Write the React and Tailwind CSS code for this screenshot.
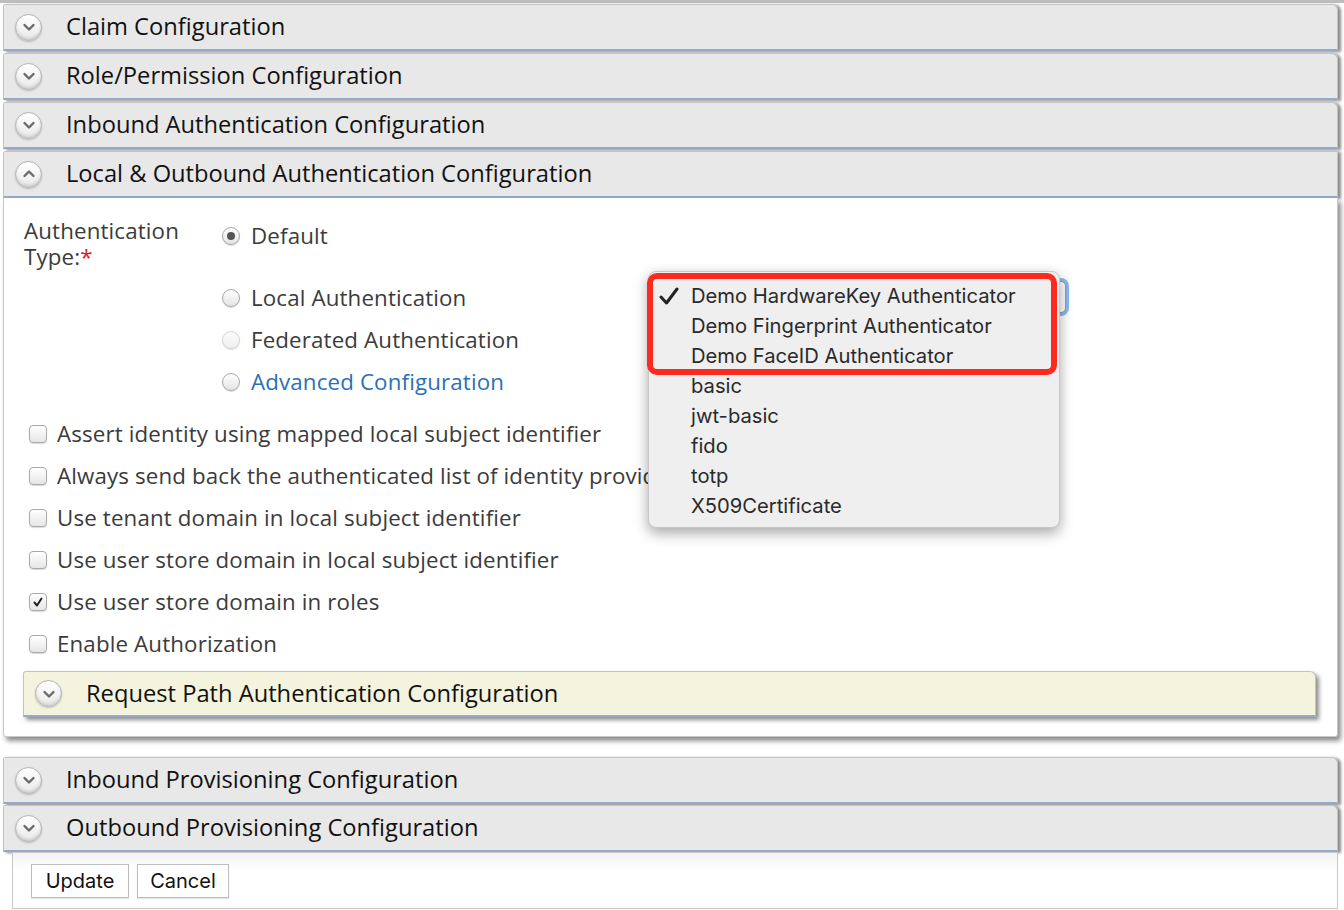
import React from "react";

const OPEN = { fontFamily: '"Open Sans", "Noto Sans", sans-serif' };
const SYS = { fontFamily: 'Inter, "Liberation Sans", sans-serif' };

function CircleIcon({ up }) {
  return (
    <div className="w-[27px] h-[27px] rounded-full border border-[#b3b3b3] bg-[linear-gradient(#ffffff,#e9e9e9)] shadow-[inset_0_-2px_3px_rgba(0,0,0,0.12),0_1px_2px_rgba(0,0,0,0.2)] flex items-center justify-center shrink-0">
      <svg width="16" height="16" viewBox="0 0 16 16">
        {up ? (
          <path d="M3.5 10 L8 5.5 L12.5 10" fill="none" stroke="#6a6a6a" strokeWidth="2.4" strokeLinecap="round" strokeLinejoin="round" />
        ) : (
          <path d="M3.5 6 L8 10.5 L12.5 6" fill="none" stroke="#6a6a6a" strokeWidth="2.4" strokeLinecap="round" strokeLinejoin="round" />
        )}
      </svg>
    </div>
  );
}

function Header({ title, up, className = "" }) {
  return (
    <div
      className={`h-[47px] bg-[#e8e8e8] border border-[#c3c3c3] border-b-2 border-b-[#98a9c8] rounded-tr-[6px] rounded-tl-[2px] shadow-[3px_1px_3px_rgba(0,0,0,0.45)] flex items-center pl-[11px] ${className}`}
    >
      <CircleIcon up={up} />
      <span className="ml-[24px] text-[23.7px] text-[#111] leading-none" style={OPEN}>
        {title}
      </span>
    </div>
  );
}

function Radio({ checked, faded }) {
  return (
    <div
      className={`w-[18px] h-[18px] rounded-full border ${faded ? "border-[#d6d6d6] bg-[linear-gradient(#fbfbfb,#f0f0f0)]" : "border-[#a9a9a9] bg-[linear-gradient(#ffffff,#e4e4e4)]"} shadow-[0_1px_1px_rgba(0,0,0,0.15)] flex items-center justify-center shrink-0`}
    >
      {checked && <div className="w-[8px] h-[8px] rounded-full bg-[#555]" />}
    </div>
  );
}

function Checkbox({ checked }) {
  return (
    <div className="w-[18px] h-[18px] rounded-[4px] border border-[#a9a9a9] bg-[linear-gradient(#ffffff,#e6e6e6)] shadow-[0_1px_1px_rgba(0,0,0,0.15)] flex items-center justify-center shrink-0">
      {checked && (
        <svg width="12" height="12" viewBox="0 0 12 12">
          <path d="M2.5 6.5 L5 9.5 L9.5 2.5" fill="none" stroke="#222" strokeWidth="2" strokeLinecap="round" strokeLinejoin="round" />
        </svg>
      )}
    </div>
  );
}

const checks = [
  ["Assert identity using mapped local subject identifier", false],
  ["Always send back the authenticated list of identity providers", false],
  ["Use tenant domain in local subject identifier", false],
  ["Use user store domain in local subject identifier", false],
  ["Use user store domain in roles", true],
  ["Enable Authorization", false],
];

const options = [
  "Demo HardwareKey Authenticator",
  "Demo Fingerprint Authenticator",
  "Demo FaceID Authenticator",
  "basic",
  "jwt-basic",
  "fido",
  "totp",
  "X509Certificate",
];

export default function App() {
  return (
    <div className="relative w-[1344px] h-[910px] overflow-hidden bg-white">
      <div className="h-[3px] bg-[#bdbdbd]" />
      <div className="pl-[3px] pr-[6px] pt-[1px]">
        <Header title="Claim Configuration" className="mb-[2px]" />
        <Header title="Role/Permission Configuration" className="mb-[2px]" />
        <Header title="Inbound Authentication Configuration" className="mb-[2px]" />
        <Header title="Local & Outbound Authentication Configuration" up className="mb-0 rounded-tr-none shadow-[3px_0_3px_rgba(0,0,0,0.35)]" />

        {/* expanded panel */}
        <div
          className="h-[539px] bg-white border-l border-r border-b border-[#c9c9c9] rounded-b-[3px] shadow-[3px_4px_5px_rgba(0,0,0,0.45)] pl-[20px] pr-[21px] pt-[20px] text-[22.3px] tracking-[0.15px] text-[#3b3b3b]"
          style={OPEN}
        >
          <div className="flex">
            <div className="w-[198px] flex flex-col">
              <div className="h-[26px] leading-[26px] overflow-visible">Authentication</div>
              <div className="h-[26px] leading-[26px] overflow-visible">
                Type:<span className="text-[#e02020]">*</span>
              </div>
            </div>
            <div className="flex flex-col">
              <div className="h-[26px] mt-[5px] mb-[28px] flex items-center">
                <Radio checked />
                <span className="ml-[11px]">Default</span>
              </div>
              <div className="h-[42px] flex items-center">
                <Radio />
                <span className="ml-[11px]">Local Authentication</span>
              </div>
              <div className="h-[42px] flex items-center">
                <Radio faded />
                <span className="ml-[11px]">Federated Authentication</span>
              </div>
              <div className="h-[42px] flex items-center">
                <Radio />
                <span className="ml-[11px] text-[#2b6fb6]">Advanced Configuration</span>
              </div>
            </div>
          </div>

          <div className="mt-[10px] pl-[5px]">
            {checks.map(([label, c]) => (
              <div key={label} className="h-[42px] flex items-center whitespace-nowrap">
                <Checkbox checked={c} />
                <span className="ml-[10px]">{label}</span>
              </div>
            ))}
          </div>

          <div className="mt-[6px] ml-[-1px]">
            <div className="h-[46px] bg-[#f3f3de] border border-[#c3c3c3] border-b-2 border-b-[#98a9c8] rounded-tr-[6px] rounded-tl-[3px] shadow-[3px_3px_4px_rgba(0,0,0,0.45)] flex items-center pl-[11px]">
              <CircleIcon />
              <span className="ml-[24px] text-[23.7px] tracking-normal text-[#111] leading-none">Request Path Authentication Configuration</span>
            </div>
          </div>
        </div>

        <div className="h-[20px]" />
        <Header title="Inbound Provisioning Configuration" className="mb-[1px]" />
        <Header title="Outbound Provisioning Configuration" />
      </div>

      {/* bottom buttons box */}
      <div className="ml-[12px] mr-[6px] h-[57px] border border-[#c9c9c9] bg-[linear-gradient(#f2f2f2,#ffffff_30%)] pl-[18px] pt-[11px] flex gap-[8px]" style={SYS}>
        <button className="h-[34px] w-[98px] border border-[#bdbdbd] bg-white text-[20px] text-[#111] shadow-[0_1px_1px_rgba(0,0,0,0.1)]">Update</button>
        <button className="h-[34px] w-[92px] border border-[#bdbdbd] bg-white text-[20px] text-[#111] shadow-[0_1px_1px_rgba(0,0,0,0.1)]">Cancel</button>
      </div>

      {/* select box behind the popup */}
      <div className="absolute left-[900px] top-[281px] w-[166px] h-[32px] rounded-[5px] border border-[#9a9a9a] bg-white shadow-[0_0_0_3px_#8cb8ef]" />

      {/* dropdown popup */}
      <div
        className="absolute left-[648px] top-[271px] w-[412px] h-[257px] rounded-[8px] bg-[#efefef] border border-[#c8c8c8] shadow-[0_5px_14px_rgba(0,0,0,0.35)] pt-[9px] text-[20.2px] text-[#2a2a2a]"
        style={SYS}
      >
        {options.map((o, i) => (
          <div key={o} className="relative h-[30px] flex items-center pl-[42px] whitespace-nowrap">
            {i === 0 && (
              <svg className="absolute left-[10px] top-[6px]" width="20" height="18" viewBox="0 0 20 18">
                <path d="M2 10 L7.5 16 L18 2" fill="none" stroke="#222" strokeWidth="3" strokeLinecap="round" strokeLinejoin="round" />
              </svg>
            )}
            {o}
          </div>
        ))}
      </div>

      {/* red highlight */}
      <div className="absolute left-[647px] top-[273px] w-[410px] h-[102px] rounded-[10px] border-[6px] border-[#fe2a1e]" />
    </div>
  );
}
